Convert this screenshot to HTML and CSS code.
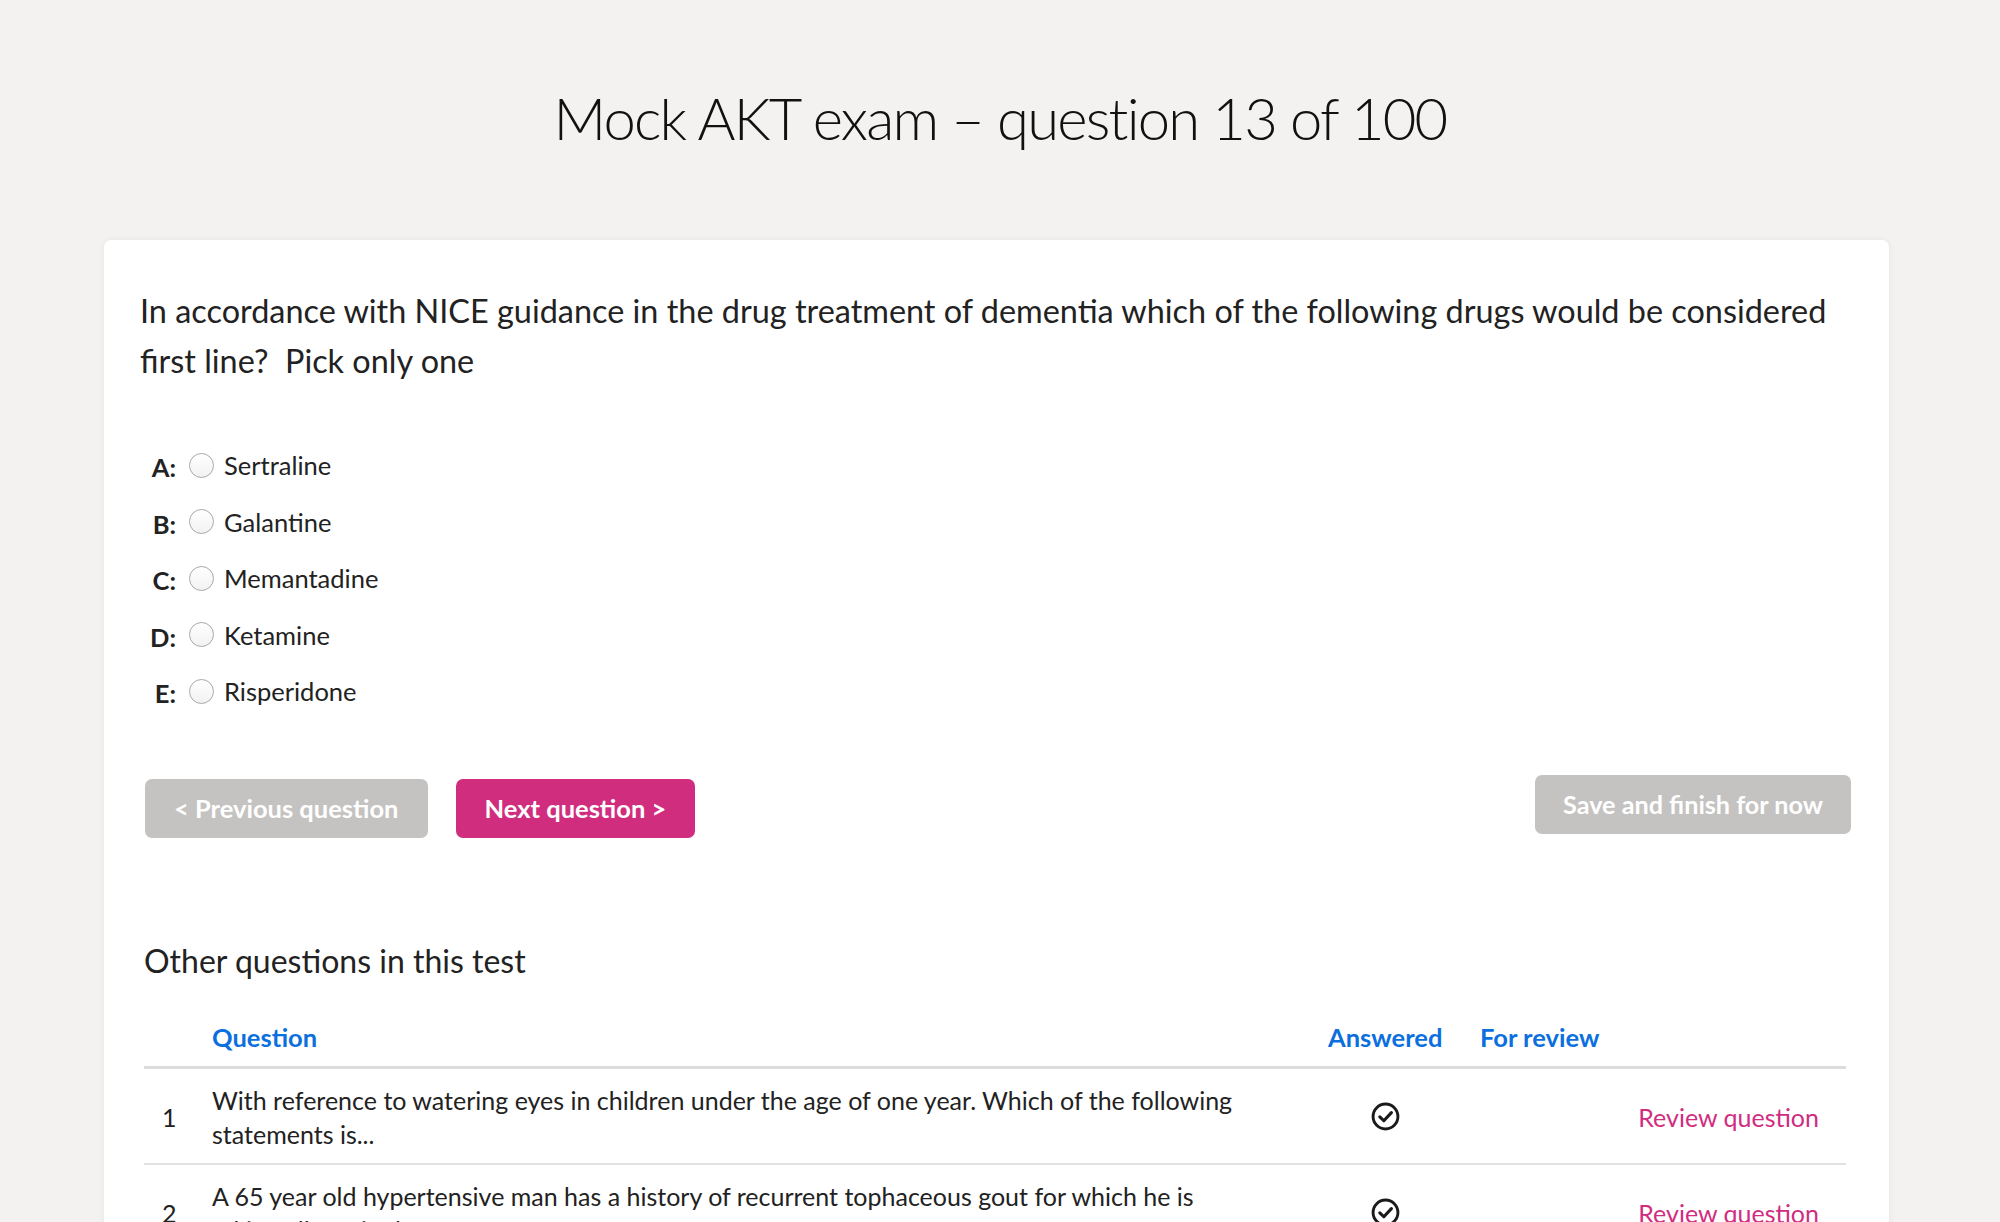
FILE: index.html
```html
<!DOCTYPE html>
<html lang="en">
<head>
<meta charset="utf-8">
<title>Mock AKT exam</title>
<link rel="stylesheet" href="styles.css">
</head>
<body>
<h1 class="title">Mock AKT exam – question 13 of 100</h1>
<main class="card">
  <p class="question">In accordance with NICE guidance in the drug treatment of dementia which of the following drugs would be considered first line?&nbsp; Pick only one</p>
  <ul class="options">
    <li class="option"><span class="opt-label">A:</span><span class="radio"></span><span class="opt-text">Sertraline</span></li>
    <li class="option"><span class="opt-label">B:</span><span class="radio"></span><span class="opt-text">Galantine</span></li>
    <li class="option"><span class="opt-label">C:</span><span class="radio"></span><span class="opt-text">Memantadine</span></li>
    <li class="option"><span class="opt-label">D:</span><span class="radio"></span><span class="opt-text">Ketamine</span></li>
    <li class="option"><span class="opt-label">E:</span><span class="radio"></span><span class="opt-text">Risperidone</span></li>
  </ul>
  <div class="actions">
    <div class="nav-buttons">
      <button class="btn btn-grey">&lt; Previous question</button>
      <button class="btn btn-pink">Next question &gt;</button>
    </div>
    <button class="btn btn-grey btn-save">Save and finish for now</button>
  </div>
  <h2 class="section-title">Other questions in this test</h2>
  <table class="q-table">
    <colgroup>
      <col class="c-num"><col class="c-q"><col class="c-ans"><col class="c-rev"><col class="c-link">
    </colgroup>
    <thead>
      <tr><th></th><th>Question</th><th>Answered</th><th>For review</th><th></th></tr>
    </thead>
    <tbody>
      <tr>
        <td class="num">1</td>
        <td class="qtext">With reference to watering eyes in children under the age of one year. Which of the following statements is...</td>
        <td class="ans"><svg class="check" viewBox="0 0 28 28" width="29" height="29"><circle cx="14" cy="14" r="12" fill="none" stroke="#1a1a1a" stroke-width="2.8"/><path d="M8.5 14.3 L12.4 18.1 L19.7 10.3" fill="none" stroke="#1a1a1a" stroke-width="3" stroke-linecap="round" stroke-linejoin="round"/></svg></td>
        <td></td>
        <td class="link"><a href="#">Review question</a></td>
      </tr>
      <tr>
        <td class="num">2</td>
        <td class="qtext">A 65 year old hypertensive man has a history of recurrent tophaceous gout for which he is taking allopurinol...</td>
        <td class="ans"><svg class="check" viewBox="0 0 28 28" width="29" height="29"><circle cx="14" cy="14" r="12" fill="none" stroke="#1a1a1a" stroke-width="2.8"/><path d="M8.5 14.3 L12.4 18.1 L19.7 10.3" fill="none" stroke="#1a1a1a" stroke-width="3" stroke-linecap="round" stroke-linejoin="round"/></svg></td>
        <td></td>
        <td class="link"><a href="#">Review question</a></td>
      </tr>
    </tbody>
  </table>
</main>
</body>
</html>
```
FILE: styles.css
```css
* { box-sizing: border-box; }
html, body { margin: 0; padding: 0; }
body {
  background: #f3f2f1;
  font-family: Lato, "Open Sans", sans-serif;
  color: #222;
  overflow: hidden;
}
.title {
  margin: 83px 0 87px;
  text-align: center;
  font-weight: 300;
  font-size: 58px;
  line-height: 70px;
  letter-spacing: -1.8px;
  color: #111;
}
.card {
  margin: 0 111px 0 104px;
  background: #fff;
  border-radius: 7px;
  box-shadow: 0 0 6px rgba(0,0,0,0.06);
  padding: 46px 38px 40px 36px;
  min-height: 1100px;
}
.question {
  margin: 0;
  font-size: 32.4px;
  line-height: 50px;
  color: #222;
}
.options {
  list-style: none;
  margin: 51px 0 0;
  padding: 0;
}
.option {
  display: flex;
  align-items: center;
  height: 56.5px;
  font-size: 25.5px;
}
.opt-label {
  width: 36px;
  text-align: right;
  font-weight: 700;
  padding-top: 4px;
}
.radio {
  width: 25px;
  height: 25px;
  border-radius: 50%;
  border: 1px solid #a9a9a9;
  background: linear-gradient(#fff, #f2f2f2);
  margin: 0 10px 0 13px;
}
.opt-text { color: #222; }
.actions {
  margin-top: 55px;
  display: flex;
  justify-content: space-between;
  align-items: flex-start;
  padding-left: 5px;
}
.nav-buttons {
  display: flex;
  gap: 28px;
  margin-top: 4px;
}
.btn {
  border: 0;
  border-radius: 7px;
  height: 59px;
  padding: 0 29px;
  font-family: Lato, sans-serif;
  font-weight: 700;
  font-size: 25.5px;
  color: #fff;
  cursor: pointer;
}
.btn-save { padding: 0 28px; font-size: 25.2px; }
.btn-grey { background: #c4c3c1; }
.btn-pink { background: #d12d7f; }
.section-title {
  margin: 103px 0 0 4px;
  font-size: 32px;
  font-weight: 400;
  line-height: 40px;
  color: #222;
}
.q-table {
  margin: 41px 0 0 4px;
  width: 1702px;
  border-collapse: collapse;
  table-layout: fixed;
  font-size: 25px;
}
.c-num { width: 54px; }
.c-q { width: 1116px; }
.c-ans { width: 152px; }
.c-rev { width: 148px; }
.c-link { width: 232px; }
.q-table th {
  text-align: left;
  color: #0b6fde;
  font-weight: 700;
  font-size: 25.5px;
  line-height: 30px;
  padding: 0 14px 14px;
  border-bottom: 3px solid #dddcda;
}
.q-table td {
  padding: 14px 14px 12px;
  border-bottom: 2px solid #e2e1df;
  line-height: 34px;
  vertical-align: middle;
}
.q-table td.num { padding-left: 18px; padding-right: 0; }
.q-table td.qtext { padding-right: 60px; }
.q-table td.ans { text-align: center; padding-right: 24px; }
.check { display: block; margin: 0 auto; }
.q-table td.link { text-align: right; padding-right: 27px; }
.link a { color: #d12d7f; text-decoration: none; }
```
